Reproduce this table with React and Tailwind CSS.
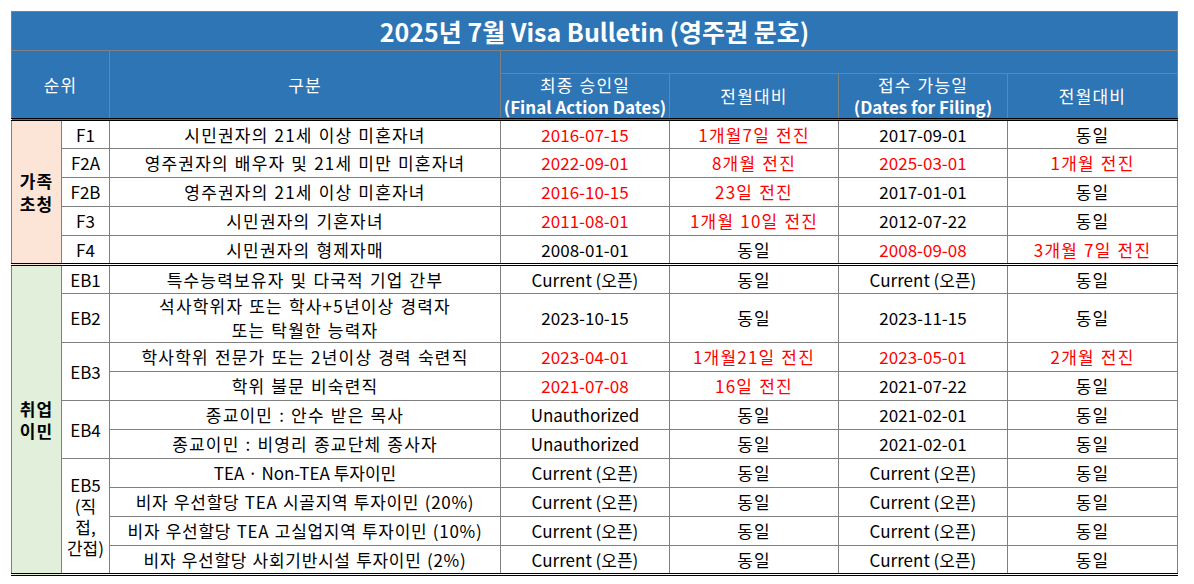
import React from "react";

const R = "text-[#ff0000]";
const cell = "border border-[#808080] text-center align-middle p-0 whitespace-nowrap";
const dbl = "border-double border-b-[3px] border-b-black";
const hd = "bg-[#2e75b6] text-white";
const kr = "tracking-[1.2px] [word-spacing:1px]";
const kr2 = "tracking-[0.7px] [word-spacing:1px]";

function Row({ h = "h-[29px]", code, codeRows, desc, descCls = kr, a, ac, b, bc, c, cc, d, dc, last, first }) {
  const bb = last ? dbl : "";
  return (
    <tr className={h}>
      {first}
      {code !== undefined && (
        <td rowSpan={codeRows || 1} className={`${cell} ${last ? dbl : ""}`}>
          {code}
        </td>
      )}
      <td className={`${cell} ${bb} ${descCls}`}>{desc}</td>
      <td className={`${cell} ${bb} ${ac ? R : ""}`}>{a}</td>
      <td className={`${cell} ${bb} ${kr} ${bc ? R : ""}`}>{b}</td>
      <td className={`${cell} ${bb} ${cc ? R : ""}`}>{c}</td>
      <td className={`${cell} ${bb} ${kr} ${dc ? R : ""}`}>{d}</td>
    </tr>
  );
}

export default function App() {
  return (
    <div className="w-[1194px] h-[584px] bg-white font-['Noto_Sans_CJK_KR',sans-serif] text-[17px] leading-[20px] text-black">
      <table className="border-collapse table-fixed w-[1166px] mt-[11px] ml-[11px]">
        <colgroup>
          <col className="w-[50px]" />
          <col className="w-[48px]" />
          <col className="w-[391px]" />
          <col className="w-[169px]" />
          <col className="w-[169px]" />
          <col className="w-[169px]" />
          <col className="w-[170px]" />
        </colgroup>
        <tbody>
          <tr className="h-[39px]">
            <td colSpan={7} className={`${cell} ${hd} text-[25px] font-bold leading-[30px]`}>
              2025년 7월 Visa Bulletin (영주권 문호)
            </td>
          </tr>
          <tr className="h-[23px]">
            <td colSpan={2} rowSpan={2} className={`${cell} ${hd} ${dbl} ${kr}`}>순위</td>
            <td rowSpan={2} className={`${cell} ${hd} ${dbl} ${kr}`}>구분</td>
            <td colSpan={4} className={`${cell} ${hd}`}></td>
          </tr>
          <tr className="h-[46px]">
            <td className={`${cell} ${hd} ${dbl} leading-[22px]`}>
              <span className={kr}>최종 승인일</span>
              <br />
              <span className="font-bold">(Final Action Dates)</span>
            </td>
            <td className={`${cell} ${hd} ${dbl} ${kr}`}>전월대비</td>
            <td className={`${cell} ${hd} ${dbl} leading-[22px]`}>
              <span className={kr}>접수 가능일</span>
              <br />
              <span className="font-bold">(Dates for Filing)</span>
            </td>
            <td className={`${cell} ${hd} ${dbl} ${kr}`}>전월대비</td>
          </tr>

          <Row
            first={
              <td rowSpan={5} className={`${cell} ${dbl} bg-[#fce4d6] font-bold leading-[23px] tracking-[1px]`}>
                가족
                <br />
                초청
              </td>
            }
            code="F1" desc="시민권자의 21세 이상 미혼자녀"
            a="2016-07-15" ac b="1개월7일 전진" bc c="2017-09-01" d="동일"
          />
          <Row code="F2A" desc="영주권자의 배우자 및 21세 미만 미혼자녀"
            a="2022-09-01" ac b="8개월 전진" bc c="2025-03-01" cc d="1개월 전진" dc />
          <Row code="F2B" desc="영주권자의 21세 이상 미혼자녀"
            a="2016-10-15" ac b="23일 전진" bc c="2017-01-01" d="동일" />
          <Row code="F3" desc="시민권자의 기혼자녀"
            a="2011-08-01" ac b="1개월 10일 전진" bc c="2012-07-22" d="동일" />
          <Row code="F4" desc="시민권자의 형제자매" last
            a="2008-01-01" b="동일" c="2008-09-08" cc d="3개월 7일 전진" dc />

          <Row
            first={
              <td rowSpan={11} className={`${cell} ${dbl} bg-[#e2efda] font-bold leading-[22px] tracking-[1px]`}>
                취업
                <br />
                이민
              </td>
            }
            code="EB1" desc="특수능력보유자 및 다국적 기업 간부"
            a="Current (오픈)" b="동일" c="Current (오픈)" d="동일"
          />
          <Row h="h-[49px]" code="EB2" descCls={`${kr} leading-[24px]`}
            desc={
              <>
                석사학위자 또는 학사+5년이상 경력자
                <br />
                또는 탁월한 능력자
              </>
            }
            a="2023-10-15" b="동일" c="2023-11-15" d="동일" />
          <Row code="EB3" codeRows={2} desc="학사학위 전문가 또는 2년이상 경력 숙련직"
            a="2023-04-01" ac b="1개월21일 전진" bc c="2023-05-01" cc d="2개월 전진" dc />
          <Row desc="학위 불문 비숙련직"
            a="2021-07-08" ac b="16일 전진" bc c="2021-07-22" d="동일" />
          <Row code="EB4" codeRows={2} desc="종교이민 : 안수 받은 목사"
            a="Unauthorized" b="동일" c="2021-02-01" d="동일" />
          <Row desc="종교이민 : 비영리 종교단체 종사자"
            a="Unauthorized" b="동일" c="2021-02-01" d="동일" />
          <Row
            first={
              <td rowSpan={4} className={`${cell} ${dbl} leading-[21px]`}>
                EB5
                <br />
                (직
                <br />
                접,
                <br />
                간접)
              </td>
            }
            desc="TEA · Non-TEA 투자이민" descCls=""
            a="Current (오픈)" b="동일" c="Current (오픈)" d="동일" />
          <Row desc="비자 우선할당 TEA 시골지역 투자이민 (20%)" descCls={kr2}
            a="Current (오픈)" b="동일" c="Current (오픈)" d="동일" />
          <Row desc="비자 우선할당 TEA 고실업지역 투자이민 (10%)" descCls={kr2}
            a="Current (오픈)" b="동일" c="Current (오픈)" d="동일" />
          <Row desc="비자 우선할당 사회기반시설 투자이민 (2%)" descCls={kr2} last
            a="Current (오픈)" b="동일" c="Current (오픈)" d="동일" />
        </tbody>
      </table>
    </div>
  );
}
